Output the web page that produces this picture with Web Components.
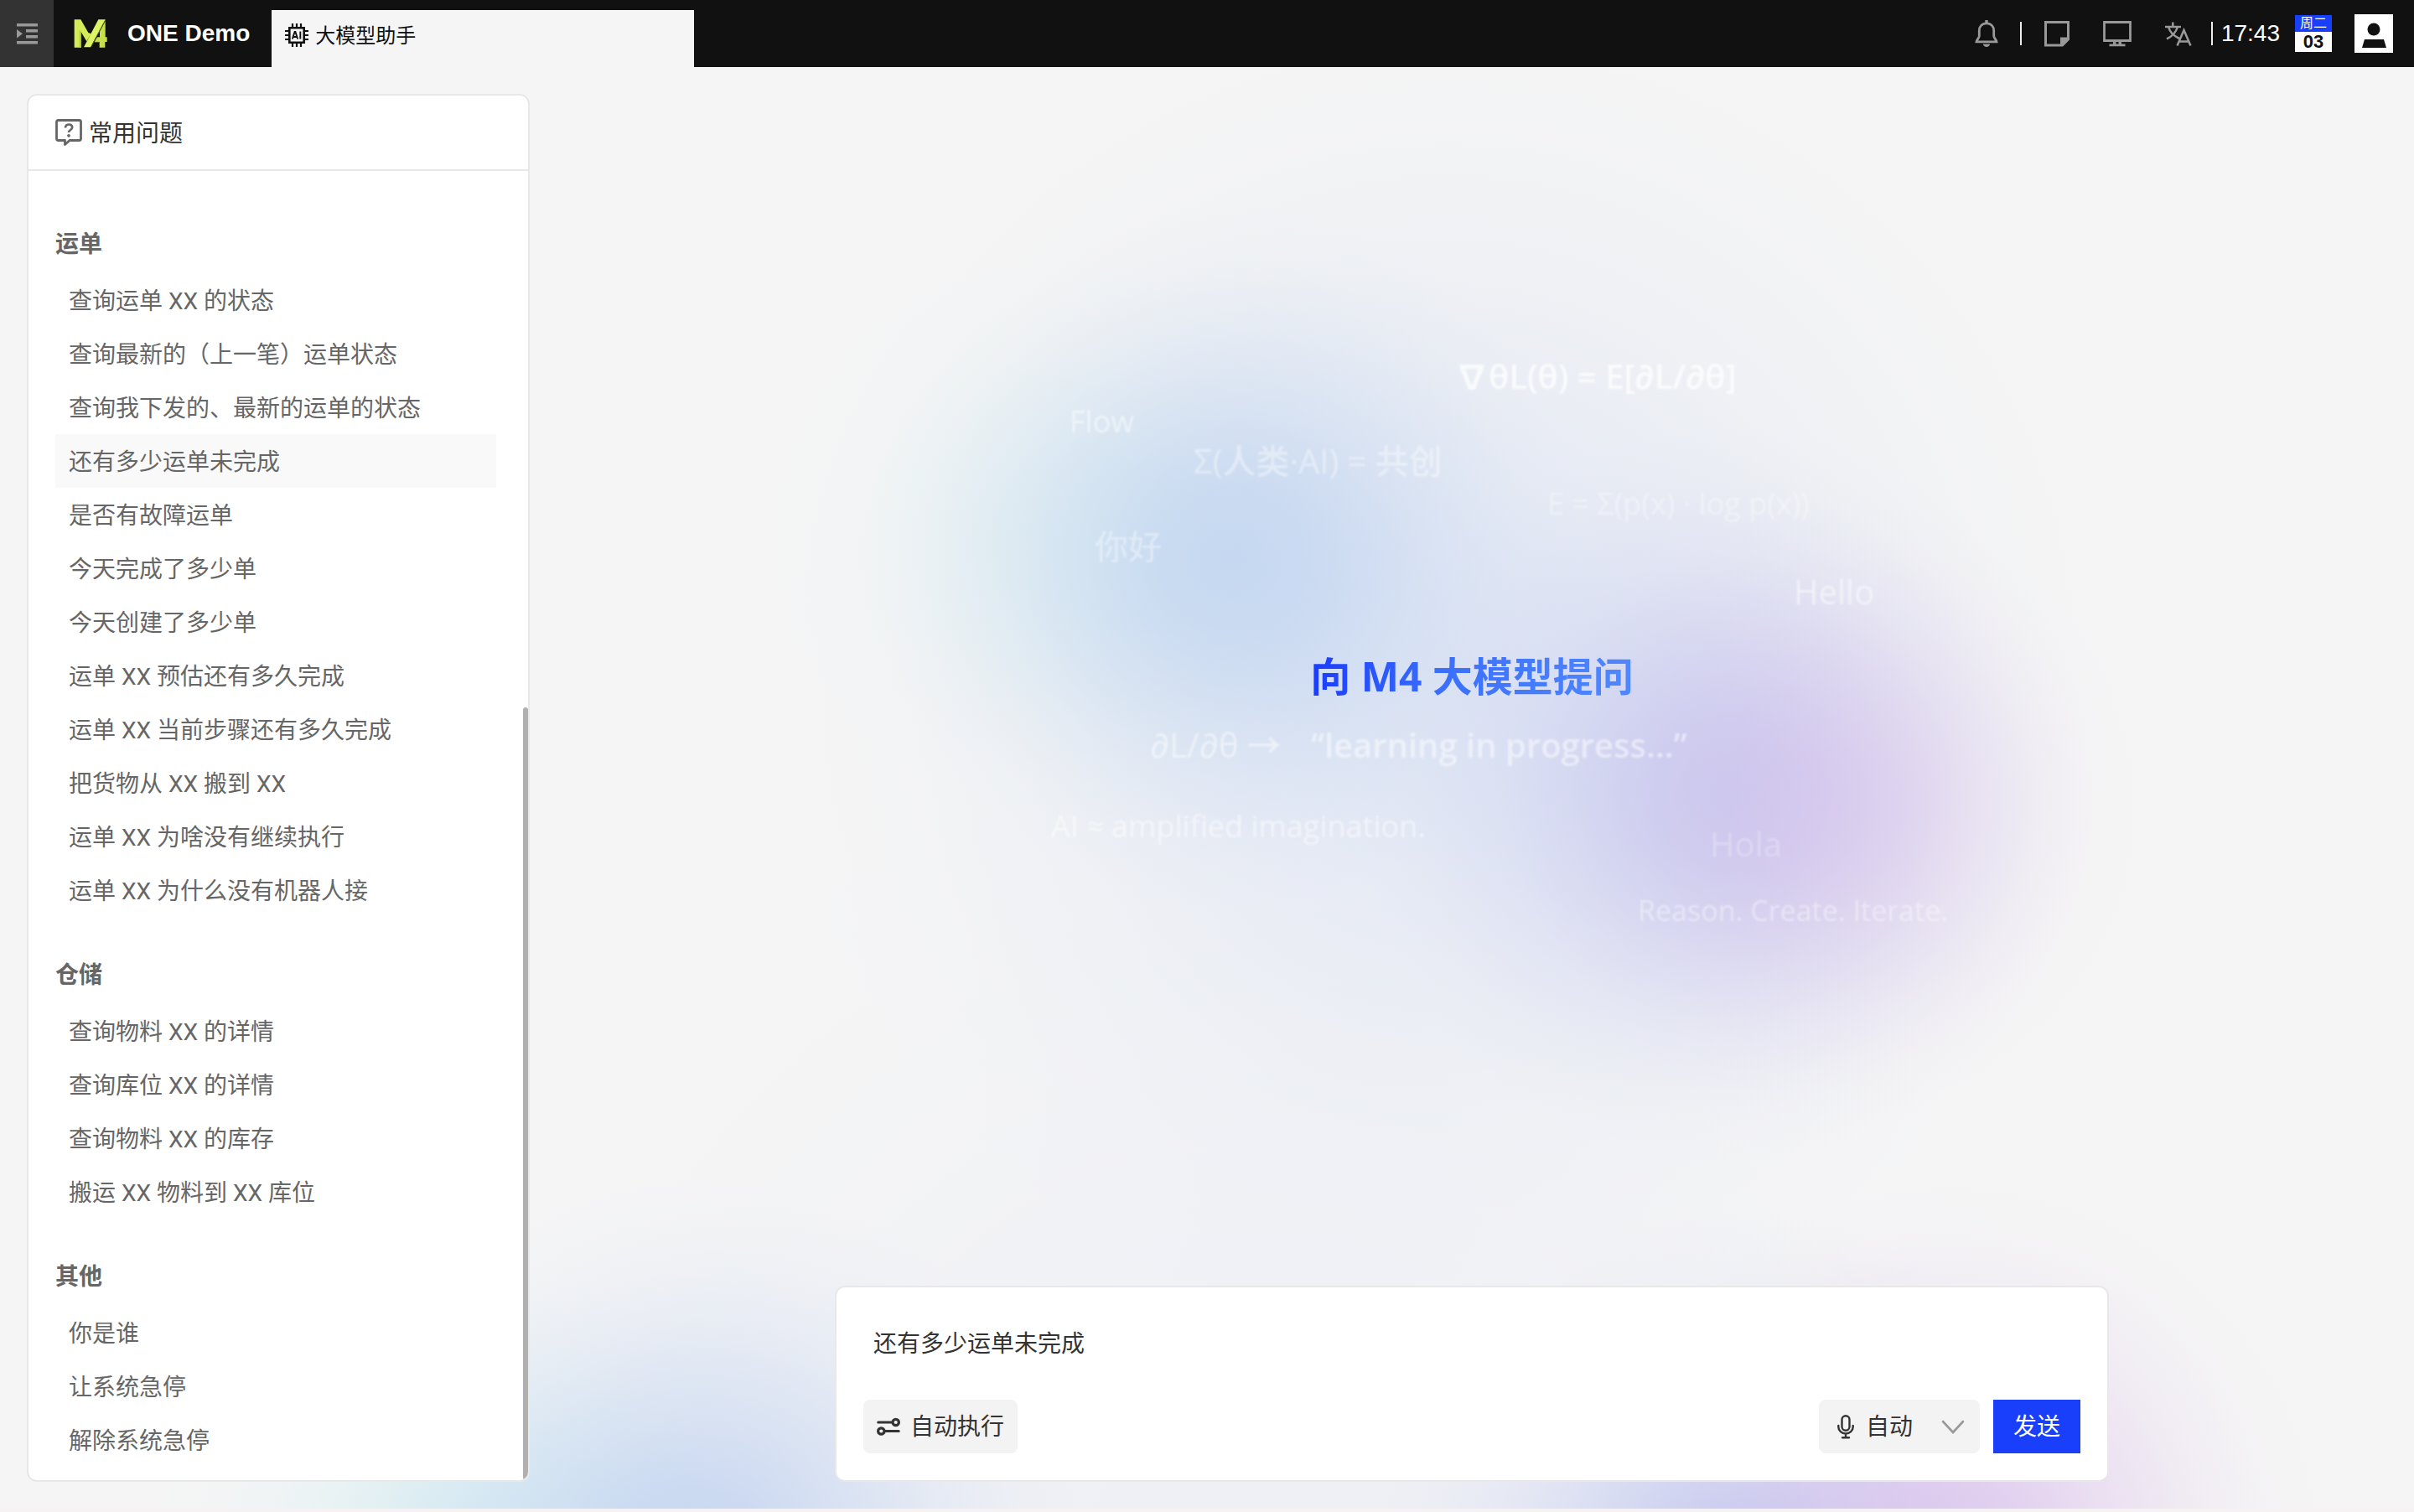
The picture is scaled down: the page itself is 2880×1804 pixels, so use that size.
<!DOCTYPE html>
<html lang="zh-CN">
<head>
<meta charset="utf-8">
<title>大模型助手</title>
<style>
  html, body {
    margin: 0;
    height: 100%;
  }
  body {
    background: #f6f2f4;
    color: #333;
    font-family: "Liberation Sans", "Noto Sans CJK SC", sans-serif;
    font-size: 28px;
    line-height: 40px;
  }
</style>
</head>
<body>
<app-shell>
  <top-bar slot="header"></top-bar>
  <glow-backdrop slot="backdrop"></glow-backdrop>
  <faq-panel slot="aside">
    <faq-group heading="运单">
      <faq-item>查询运单 XX 的状态</faq-item>
      <faq-item>查询最新的（上一笔）运单状态</faq-item>
      <faq-item>查询我下发的、最新的运单的状态</faq-item>
      <faq-item active>还有多少运单未完成</faq-item>
      <faq-item>是否有故障运单</faq-item>
      <faq-item>今天完成了多少单</faq-item>
      <faq-item>今天创建了多少单</faq-item>
      <faq-item>运单 XX 预估还有多久完成</faq-item>
      <faq-item>运单 XX 当前步骤还有多久完成</faq-item>
      <faq-item>把货物从 XX 搬到 XX</faq-item>
      <faq-item>运单 XX 为啥没有继续执行</faq-item>
      <faq-item>运单 XX 为什么没有机器人接</faq-item>
    </faq-group>
    <faq-group heading="仓储">
      <faq-item>查询物料 XX 的详情</faq-item>
      <faq-item>查询库位 XX 的详情</faq-item>
      <faq-item>查询物料 XX 的库存</faq-item>
      <faq-item>搬运 XX 物料到 XX 库位</faq-item>
    </faq-group>
    <faq-group heading="其他">
      <faq-item>你是谁</faq-item>
      <faq-item>让系统急停</faq-item>
      <faq-item>解除系统急停</faq-item>
    </faq-group>
  </faq-panel>
  <chat-stage>
    <span slot="title">向 M4 大模型提问</span>
    <prompt-composer></prompt-composer>
  </chat-stage>
</app-shell>

<script>
const ICONS = {
  menu: `<svg viewBox="0 0 25 25"><path fill="currentColor" d="M0 0h25v3.5H0zM11 7h14v3.500H11zM11 14h14v3.500H11zM0 21h25v3.500H0zM0 7l7 5.200-7 5.300z"/></svg>`,
  logo: `<svg viewBox="0 0 120 102">
    <path fill="#d3ec57" d="M2 1h23l27 47 10 4-16 27-20-34v56H2z"/>
    <path fill="#b5cd3c" d="M26 45v56h-6V35z"/>
    <path fill="#dcf465" d="M88 1h25L60 100H36z"/>
    <path fill="#c6e04a" d="M113 7v57h6v17h-7v20H92V81H74l10-17h9V44z"/>
    <path fill="none" stroke="#6f8020" stroke-width="2" d="M114 2L61 100M74 82h18"/>
  </svg>`,
  chip: `<svg viewBox="0 0 28 28"><path fill="none" stroke="currentColor" stroke-width="2.600" d="M5.300 5.300h17.400v17.400H5.300z"/>
    <path stroke="currentColor" stroke-width="2.200" d="M9 0v5M14 0v5M19 0v5M9 23v5M14 23v5M19 23v5M0 9h5M0 14h5M0 19h5M23 9h5M23 14h5M23 19h5"/>
    <path fill="none" stroke="currentColor" stroke-width="1.900" d="M8.800 18.500l2.800-8.500h.8l2.800 8.500M9.800 16h4.400M18.300 9.500v9"/></svg>`,
  bell: `<svg viewBox="0 0 36 36"><path fill="none" stroke="currentColor" stroke-width="2.800" stroke-linejoin="miter" d="M18 5.800c-5.500 0-8.700 4-8.700 8.700V21c0 2-3 4.500-3.300 6.800h24c-.3-2.300-3.300-4.800-3.300-6.800v-6.500c0-4.700-3.200-8.700-8.700-8.700z"/><path fill="currentColor" d="M16.300 2h3.400v4h-3.400zM13.800 30.500h8.400c-.5 2.200-2 3.500-4.200 3.500s-3.700-1.300-4.200-3.500z"/></svg>`,
  note: `<svg viewBox="0 0 36 36"><path fill="none" stroke="currentColor" stroke-width="3" d="M4.500 4.500h27V25l-7 7h-20z"/><path fill="currentColor" d="M22 22.500h10V25l-8 8h-2z"/></svg>`,
  monitor: `<svg viewBox="0 0 36 36"><path fill="none" stroke="currentColor" stroke-width="2.800" d="M2.500 4.500h31v22h-31z"/><path fill="currentColor" d="M13 27h3.500v4H13zM19.500 27H23v4h-3.500zM8.500 30.500h19v2.700h-19z"/></svg>`,
  translate: `<svg viewBox="0 0 36 36"><path fill="none" stroke="currentColor" stroke-width="2.500" d="M3 10h19M12.300 4.500V10M7 10c1.500 5.500 6.500 11 13 14M18 10c-1.800 5.800-6.500 11.500-13 14.300M17.500 32.500l8-18.500 8 18.500M19.800 27.500h11.400"/></svg>`,
  user: `<svg viewBox="0 0 48 48"><path fill="#fff" d="M1 1h46v46H1z"/><circle cx="24" cy="19" r="7.500" fill="#111"/><path fill="#111" d="M13 31h23l3 10H10z"/></svg>`,
  question: `<svg viewBox="0 0 32 32"><path fill="none" stroke="currentColor" stroke-width="2.800" stroke-linejoin="round" d="M3.500 1.500h25q2 0 2 2v20q0 2-2 2H17l-5.500 5v-5h-8q-2 0-2-2v-20q0-2 2-2z"/><path fill="none" stroke="currentColor" stroke-width="2.700" d="M12 10.500c0-2.600 1.700-4 4.200-4s4 1.400 4 3.500c0 3-4.200 3-4.200 6"/><circle cx="16" cy="19.800" r="1.900" fill="currentColor"/></svg>`,
  sliders: `<svg viewBox="0 0 28 28"><g fill="none" stroke="currentColor" stroke-width="3.200" stroke-linecap="round"><path d="M1.800 9h16M26.200 19.500h-16"/><circle cx="22.700" cy="9" r="3.700"/><circle cx="5.300" cy="19.500" r="3.700"/></g></svg>`,
  mic: `<svg viewBox="0 0 32 32"><g fill="none" stroke="currentColor" stroke-width="2.400" stroke-linecap="round"><rect x="11.500" y="3.200" width="9" height="17.500" rx="4.500"/><path d="M7.300 15v1.500a8.700 8 0 0 0 17.400 0V15M16 25v4M12 29.300h8"/></g></svg>`,
  chevron: `<svg viewBox="0 0 28 28"><path fill="none" stroke="currentColor" stroke-width="2.600" stroke-linecap="round" d="M2 8l12 13L26 8"/></svg>`
};

class UiIcon extends HTMLElement {
  connectedCallback() {
    this.attachShadow({ mode: 'open' });
    this.shadowRoot.innerHTML = `
      <style>
        :host {
          display: block;
          flex: none;
          width: var(--icon-size, 28px);
        }
        svg {
          display: block;
          width: 100%;
        }
      </style>
      ${ICONS[this.getAttribute('name')]}
    `;
  }
}

class AppShell extends HTMLElement {
  connectedCallback() {
    this.attachShadow({ mode: 'open' });
    this.shadowRoot.innerHTML = `
      <style>
        :host {
          display: flex;
          flex-direction: column;
          box-sizing: border-box;
          min-height: 100vh;
          padding-bottom: 4px;
        }
        main {
          position: relative;
          flex: 1;
          display: flex;
          box-sizing: border-box;
          padding: 32px 0 32px 32px;
          background: #f5f5f5;
        }
        ::slotted(*) {
          position: relative;
        }
        ::slotted([slot="backdrop"]) {
          position: absolute;
          inset: 0;
        }
      </style>
      <slot name="header"></slot>
      <main>
        <slot name="backdrop"></slot>
        <slot name="aside"></slot>
        <slot></slot>
      </main>
    `;
  }
}

class TopBar extends HTMLElement {
  connectedCallback() {
    this.attachShadow({ mode: 'open' });
    this.shadowRoot.innerHTML = `
      <style>
        :host {
          display: flex;
          height: 80px;
          background: #111;
          color: #fff;
        }
        button {
          display: flex;
          align-items: center;
          justify-content: center;
          padding: 0;
          border: 0;
          background: none;
          color: #999;
          font: inherit;
        }
        .menu {
          width: 64px;
          background: #333;
          --icon-size: 25px;
        }
        .brand {
          display: flex;
          align-items: center;
          gap: 24px;
          padding: 0 26px 0 24px;
          color: #fff;
          font-weight: 700;
          text-decoration: none;
          white-space: nowrap;
          --icon-size: 40px;
        }
        .tab {
          display: flex;
          align-items: center;
          gap: 8px;
          box-sizing: border-box;
          width: 504px;
          margin-top: 12px;
          padding: 0 16px 8px;
          background: #f5f5f5;
          color: #111;
          font-size: 24px;
          text-decoration: none;
        }
        .tab span {
          padding-top: 2px;
        }
        .tools {
          display: flex;
          align-items: center;
          margin-left: auto;
          padding-right: 24px;
          --icon-size: 36px;
        }
        .icons {
          display: flex;
          gap: 36px;
        }
        .divider {
          width: 2px;
          height: 28px;
          margin: 0 24px 0 22px;
          background: #eee;
        }
        .divider.tight {
          margin-right: 10px;
        }
        .date {
          width: 44px;
          margin: 0 26px 0 18px;
          background: #fff;
          color: #111;
          font-size: 22px;
          font-weight: 700;
          line-height: 24px;
          text-align: center;
        }
        .weekday {
          display: block;
          background: #1a3ffa;
          color: #fff;
          font-size: 16px;
          font-weight: 400;
          line-height: 20px;
        }
        .user {
          --icon-size: 48px;
        }
      </style>
      <button class="menu" aria-label="菜单"><ui-icon name="menu"></ui-icon></button>
      <a class="brand" href="#"><ui-icon name="logo"></ui-icon><span>ONE Demo</span></a>
      <a class="tab" href="#"><ui-icon name="chip"></ui-icon><span>大模型助手</span></a>
      <div class="tools">
        <button aria-label="通知"><ui-icon name="bell"></ui-icon></button>
        <div class="divider"></div>
        <div class="icons">
          <button aria-label="便签"><ui-icon name="note"></ui-icon></button>
          <button aria-label="显示"><ui-icon name="monitor"></ui-icon></button>
          <button aria-label="语言"><ui-icon name="translate"></ui-icon></button>
        </div>
        <div class="divider tight"></div>
        <time>17:43</time>
        <div class="date"><span class="weekday">周二</span>03</div>
        <button class="user" aria-label="用户"><ui-icon name="user"></ui-icon></button>
      </div>
    `;
  }
}

class GlowBackdrop extends HTMLElement {
  connectedCallback() {
    // colour, alpha, centre and radius of each glow, front to back
    const glows = [
      ['218, 180, 232', .38, '76%', '51.500%', 370],
      ['178, 182, 236', .58, '71.500%', '50.500%', 440],
      ['172, 200, 238', .56, '51%', '34%', 420],
      ['190, 234, 238', .24, '43.500%', '32.500%', 330],
      ['208, 219, 243', .55, '60%', '42%', 800],
      ['215, 180, 235', .6, '81%', '103%', 440],
      ['168, 180, 236', .6, '72%', '105%', 440],
      ['172, 196, 238', .62, '29%', '104%', 460],
      ['180, 232, 240', .42, '19.500%', '105%', 380],
      ['220, 226, 245', .3, '52%', '105%', 1000]
    ];
    // text, left, top, size, weight, opacity
    const words = [
      ['∇θL(θ) = E[∂L/∂θ]', 1736, 341, 40, 600, .75],
      ['Flow', 1276, 395, 36, 500, .5],
      ['Σ(人类·AI) = 共创', 1424, 442, 40, 500, .4],
      ['E = Σ(p(x) · log p(x))', 1846, 493, 36, 500, .35],
      ['你好', 1306, 544, 40, 400, .4],
      ['Hello', 2140, 598, 40, 500, .5],
      ['∂L/∂θ →', 1372, 781, 40, 500, .5],
      ['“learning in progress…”', 1564, 781, 40, 600, .5],
      ['AI ≈ amplified imagination.', 1254, 878, 36, 400, .5],
      ['Hola', 2040, 899, 40, 500, .25],
      ['Reason. Create. Iterate.', 1954, 978, 34, 500, .4]
    ];
    const gradients = glows.map(([rgb, a, x, y, r]) =>
      `radial-gradient(circle ${r}px at ${x} ${y}, rgba(${rgb}, ${a}), rgba(${rgb}, ${a * .86}) 20%, rgba(${rgb}, ${a * .55}) 42%, rgba(${rgb}, ${a * .24}) 65%, rgba(${rgb}, ${a * .07}) 84%, rgba(${rgb}, 0))`
    ).join(',');
    this.attachShadow({ mode: 'open' });
    this.shadowRoot.innerHTML = `
      <style>
        :host {
          display: block;
          overflow: hidden;
          background: ${gradients};
          color: #fff;
          font-family: "Open Sans", "Noto Sans CJK SC", sans-serif;
          line-height: 56px;
          white-space: nowrap;
        }
        span {
          position: absolute;
          filter: blur(1px);
        }
      </style>
      ${words.map(([text, x, y, size, weight, o]) =>
        `<span style="left:${x}px;top:${y}px;font-size:${size}px;font-weight:${weight};opacity:${o}">${text}</span>`).join('')}
    `;
  }
}

class FaqPanel extends HTMLElement {
  connectedCallback() {
    this.attachShadow({ mode: 'open' });
    this.shadowRoot.innerHTML = `
      <style>
        :host {
          display: flex;
          flex: none;
          flex-direction: column;
          box-sizing: border-box;
          width: 600px;
          border: 2px solid #e8e8e8;
          border-radius: 12px;
          background: #fff;
          overflow: hidden;
        }
        header {
          display: flex;
          align-items: center;
          gap: 8px;
          height: 88px;
          padding: 0 32px;
          border-bottom: 2px solid #e8e8e8;
          --icon-size: 32px;
        }
        header ui-icon {
          color: #666;
        }
        h2 {
          margin: 0;
          padding-top: 4px;
          font-size: 28px;
          font-weight: 400;
        }
        .list {
          position: relative;
          flex: 1;
          display: flex;
          flex-direction: column;
          gap: 32px;
          padding: 50px 38px 16px 32px;
        }
        .thumb {
          position: absolute;
          right: 0;
          bottom: 0;
          width: 6px;
          height: 59%;
          border-radius: 3px;
          background: #b0b0b0;
        }
      </style>
      <header><ui-icon name="question"></ui-icon><h2>常用问题</h2></header>
      <div class="list">
        <slot></slot>
        <div class="thumb"></div>
      </div>
    `;
  }
}

class FaqGroup extends HTMLElement {
  connectedCallback() {
    this.attachShadow({ mode: 'open' });
    this.shadowRoot.innerHTML = `
      <style>
        :host {
          display: flex;
          flex-direction: column;
          color: #666;
        }
        h3 {
          margin: 0;
          padding-top: 4px;
          font-size: 28px;
          line-height: 68px;
        }
      </style>
      <h3>${this.getAttribute('heading')}</h3>
      <slot></slot>
    `;
  }
}

class FaqItem extends HTMLElement {
  connectedCallback() {
    this.attachShadow({ mode: 'open' });
    this.shadowRoot.innerHTML = `
      <style>
        :host {
          display: block;
          font-family: Roboto, "Noto Sans CJK SC", sans-serif;
        }
        button {
          display: block;
          width: 100%;
          height: 64px;
          padding: 4px 16px 0;
          border: 0;
          background: none;
          color: inherit;
          font: inherit;
          text-align: left;
          white-space: nowrap;
        }
        :host([active]) button {
          background: #f9f9f9;
        }
      </style>
      <button><slot></slot></button>
    `;
  }
}

class ChatStage extends HTMLElement {
  connectedCallback() {
    this.attachShadow({ mode: 'open' });
    this.shadowRoot.innerHTML = `
      <style>
        :host {
          display: flex;
          flex: 1;
          flex-direction: column;
          align-items: center;
          min-width: 0;
        }
        .welcome {
          flex: 1;
          display: flex;
          align-items: center;
          padding-bottom: 32px;
        }
        h1 {
          margin: 0;
          background: linear-gradient(90deg, #1a3cff, #3b6ffc 40%, #5088ff);
          -webkit-background-clip: text;
          background-clip: text;
          color: transparent;
          font-family: "Noto Sans", "Noto Sans CJK SC", sans-serif;
          font-size: 48px;
          line-height: 72px;
        }
      </style>
      <div class="welcome"><h1><slot name="title"></slot></h1></div>
      <slot></slot>
    `;
  }
}

class PromptComposer extends HTMLElement {
  connectedCallback() {
    this.attachShadow({ mode: 'open' });
    this.shadowRoot.innerHTML = `
      <style>
        :host {
          display: block;
          box-sizing: border-box;
          width: 100%;
          max-width: 1520px;
          border: 2px solid #e8e8e8;
          border-radius: 12px;
          background: #fff;
        }
        form {
          display: flex;
          flex-direction: column;
          gap: 24px;
          padding: 32px;
        }
        textarea {
          display: block;
          box-sizing: border-box;
          width: 100%;
          height: 78px;
          padding: 16px 12px;
          border: 0;
          outline: 0;
          background: none;
          resize: none;
          color: #333;
          font: inherit;
        }
        .bar {
          display: flex;
          gap: 16px;
        }
        button, .voice {
          display: flex;
          align-items: center;
          height: 64px;
          padding: 0 16px;
          border: 0;
          border-radius: 8px;
          background: #f3f3f3;
          color: #333;
          font: inherit;
        }
        button span {
          padding-top: 2px;
        }
        .auto {
          gap: 12px;
          margin-right: auto;
        }
        .voice {
          position: relative;
          box-sizing: border-box;
          gap: 8px;
          padding-right: 0;
          --icon-size: 32px;
        }
        select {
          appearance: none;
          box-sizing: border-box;
          width: 136px;
          height: 64px;
          padding: 2px 0 0;
          border: 0;
          outline: 0;
          background: none;
          color: inherit;
          font: inherit;
        }
        .voice .arrow {
          position: absolute;
          right: 18px;
          color: #999;
          pointer-events: none;
          --icon-size: 28px;
        }
        .send {
          padding: 0 24px;
          border-radius: 0;
          background: #1a3ffa;
          color: #fff;
        }
      </style>
      <form>
        <textarea aria-label="提问内容">还有多少运单未完成</textarea>
        <div class="bar">
          <button type="button" class="auto"><ui-icon name="sliders"></ui-icon><span>自动执行</span></button>
          <label class="voice">
            <ui-icon name="mic"></ui-icon>
            <select aria-label="语音语言"><option>自动</option></select>
            <ui-icon class="arrow" name="chevron"></ui-icon>
          </label>
          <button type="button" class="send"><span>发送</span></button>
        </div>
      </form>
    `;
  }
}

customElements.define('ui-icon', UiIcon);
customElements.define('app-shell', AppShell);
customElements.define('top-bar', TopBar);
customElements.define('glow-backdrop', GlowBackdrop);
customElements.define('faq-panel', FaqPanel);
customElements.define('faq-group', FaqGroup);
customElements.define('faq-item', FaqItem);
customElements.define('chat-stage', ChatStage);
customElements.define('prompt-composer', PromptComposer);
</script>
</body>
</html>
